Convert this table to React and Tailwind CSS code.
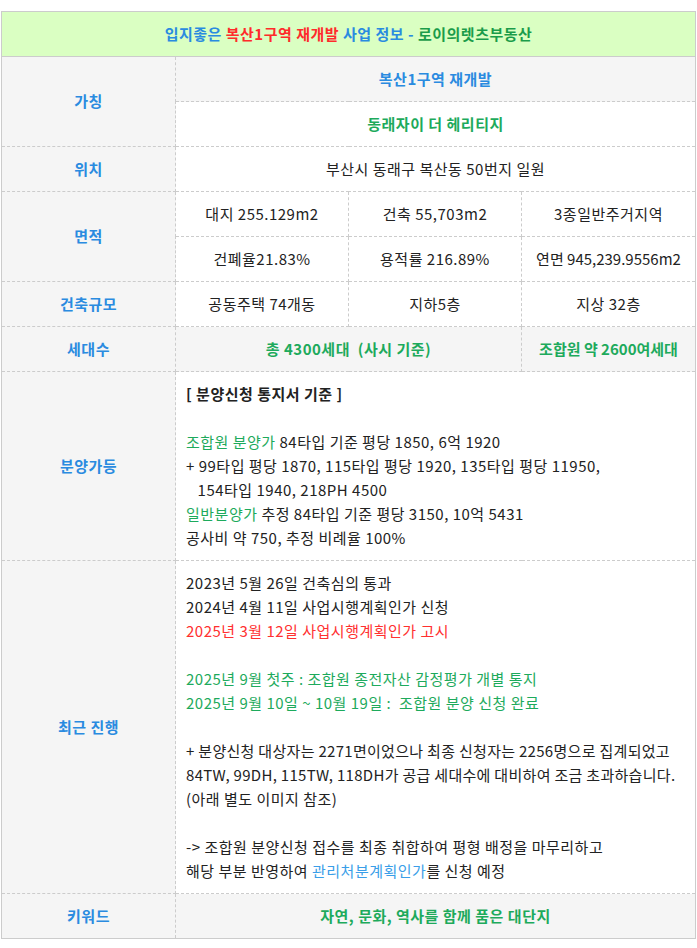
import React from "react";

const cell = "border border-dashed border-[#cccccc] text-center text-[15px] tracking-[0.5px]";
const th = `${cell} bg-[#f5f5f5] font-bold text-[#2a8be0]`;
const td = `${cell} text-[#222]`;
const tdGreen = `${cell} font-bold text-[#1daa5c]`;
const green = "text-[#1daa5c]";
const block = "border border-dashed border-[#cccccc] px-[10px] py-[10px] text-[15px] tracking-[0.5px] leading-[24px] text-[#222] text-left";

export default function App() {
  return (
    <div className="bg-white min-h-screen pt-[11px] pl-[1px]" style={{ fontFamily: '"Noto Sans CJK KR", "Noto Sans", sans-serif' }}>
      <table className="w-[694px] border-collapse border border-solid border-[#cccccc] table-fixed">
        <colgroup>
          <col className="w-[174px]" />
          <col className="w-[173px]" />
          <col className="w-[173px]" />
          <col className="w-[174px]" />
        </colgroup>
        <tbody>
          <tr className="h-[45px]">
            <td colSpan={4} className="border border-solid border-[#cccccc] bg-[#daffc2] text-center font-bold text-[15px] tracking-[0.5px]">
              <span className="text-[#2a8be0]">입지좋은 </span>
              <span className="text-[#ff2b2b]">복산1구역 재개발</span>
              <span className="text-[#2a8be0]"> 사업 정보 - </span>
              <span className="text-[#1a9c4a]">로이의렛츠부동산</span>
            </td>
          </tr>
          <tr className="h-[45px]">
            <td rowSpan={2} className={th}>가칭</td>
            <td colSpan={3} className={th}>복산1구역 재개발</td>
          </tr>
          <tr className="h-[45px]">
            <td colSpan={3} className={tdGreen}>동래자이 더 헤리티지</td>
          </tr>
          <tr className="h-[45px]">
            <td className={th}>위치</td>
            <td colSpan={3} className={td}>부산시 동래구 복산동 50번지 일원</td>
          </tr>
          <tr className="h-[45px]">
            <td rowSpan={2} className={th}>면적</td>
            <td className={td}>대지 255.129m2</td>
            <td className={td}>건축 55,703m2</td>
            <td className={td}>3종일반주거지역</td>
          </tr>
          <tr className="h-[45px]">
            <td className={td}>건폐율21.83%</td>
            <td className={td}>용적률 216.89%</td>
            <td className={`${td} tracking-normal`}>연면 945,239.9556m2</td>
          </tr>
          <tr className="h-[45px]">
            <td className={th}>건축규모</td>
            <td className={td}>공동주택 74개동</td>
            <td className={td}>지하5층</td>
            <td className={td}>지상 32층</td>
          </tr>
          <tr className="h-[45px]">
            <td className={th}>세대수</td>
            <td colSpan={2} className={`${tdGreen} bg-[#f5f5f5]`}>총 4300세대 &nbsp;(사시 기준)</td>
            <td className={`${tdGreen} bg-[#f5f5f5] tracking-normal`}>조합원 약 2600여세대</td>
          </tr>
          <tr>
            <td className={th}>분양가등</td>
            <td colSpan={3} className={block}>
              <p className="font-bold">[ 분양신청 통지서 기준 ]</p>
              <p>&nbsp;</p>
              <p><span className={green}>조합원 분양가</span> 84타입 기준 평당 1850, 6억 1920</p>
              <p>+ 99타입 평당 1870, 115타입 평당 1920, 135타입 평당 11950,</p>
              <p>&nbsp;&nbsp;&nbsp;154타입 1940, 218PH 4500</p>
              <p><span className={green}>일반분양가</span> 추정 84타입 기준 평당 3150, 10억 5431</p>
              <p>공사비 약 750, 추정 비례율 100%</p>
            </td>
          </tr>
          <tr>
            <td className={th}>최근 진행</td>
            <td colSpan={3} className={block}>
              <p>2023년 5월 26일 건축심의 통과</p>
              <p>2024년 4월 11일 사업시행계획인가 신청</p>
              <p className="text-[#ff3030]">2025년 3월 12일 사업시행계획인가 고시</p>
              <p>&nbsp;</p>
              <p className={green}>2025년 9월 첫주 : 조합원 종전자산 감정평가 개별 통지</p>
              <p className={green}>2025년 9월 10일 ~ 10월 19일 : &nbsp;조합원 분양 신청 완료</p>
              <p>&nbsp;</p>
              <p className="tracking-[0.3px]">+ 분양신청 대상자는 2271면이었으나 최종 신청자는 2256명으로 집계되었고</p>
              <p className="tracking-[0.3px]">84TW, 99DH, 115TW, 118DH가 공급 세대수에 대비하여 조금 초과하습니다.</p>
              <p>(아래 별도 이미지 참조)</p>
              <p>&nbsp;</p>
              <p>-&gt; 조합원 분양신청 접수를 최종 취합하여 평형 배정을 마무리하고</p>
              <p>해당 부분 반영하여 <span className="text-[#3a9ee8]">관리처분계획인가</span>를 신청 예정</p>
            </td>
          </tr>
          <tr className="h-[45px]">
            <td className={th}>키워드</td>
            <td colSpan={3} className={`${tdGreen} bg-[#f5f5f5]`}>자연, 문화, 역사를 함께 품은 대단지</td>
          </tr>
        </tbody>
      </table>
    </div>
  );
}
